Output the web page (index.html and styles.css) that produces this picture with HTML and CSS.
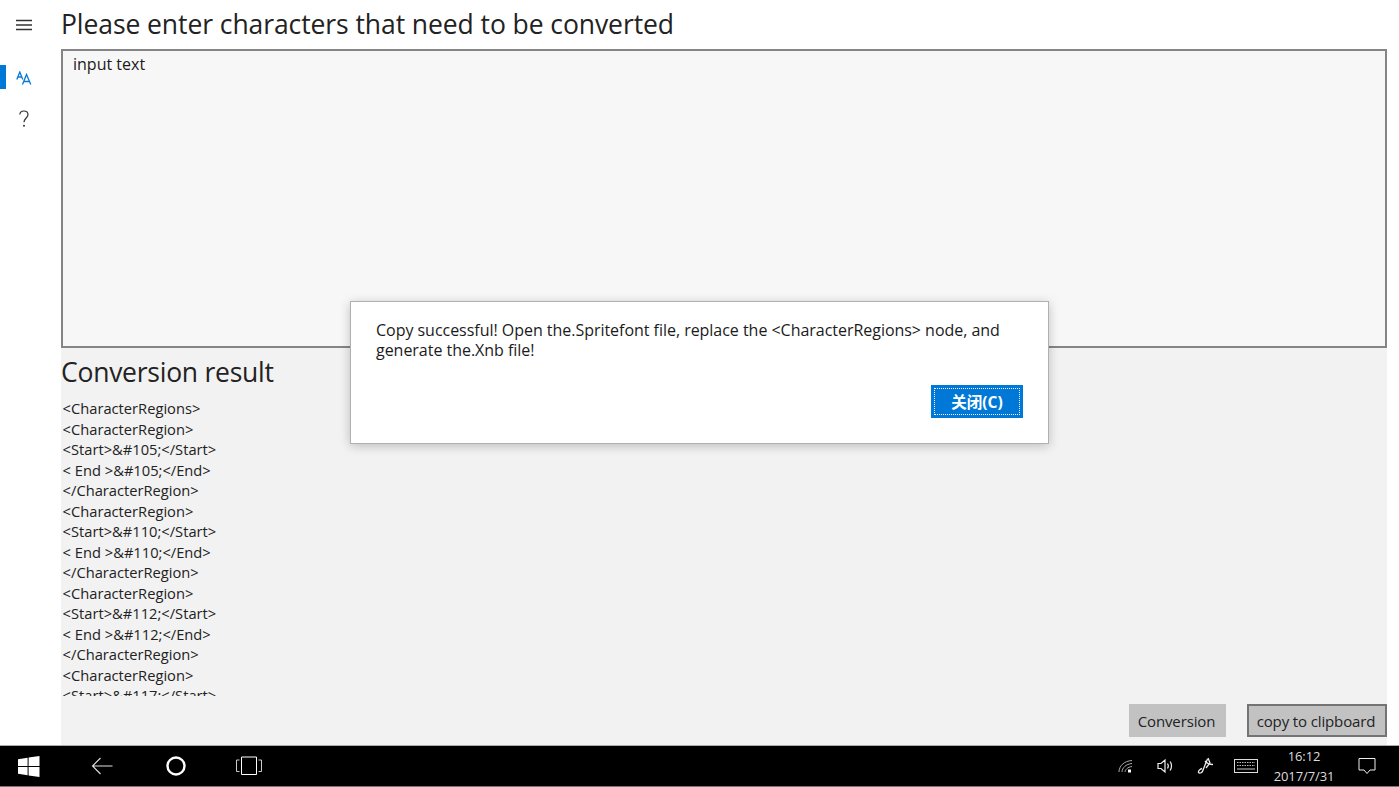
FILE: index.html
```html
<!DOCTYPE html>
<html lang="en">
<head>
<meta charset="utf-8">
<title>Character conversion</title>
<link rel="stylesheet" href="styles.css">
</head>
<body>
<div class="app">
  <nav class="sidebar">
    <div class="nav-item nav-menu">
      <svg width="18" height="12" viewBox="0 0 18 12"><path d="M1 1.500H17M1 6H17M1 10.500H17" stroke="#333" stroke-width="1.300" fill="none"/></svg>
    </div>
    <div class="nav-item nav-font active">
      <svg width="16" height="14" viewBox="0 0 16 14"><g fill="none" stroke="#0a78d7" stroke-width="1.300"><path d="M0.800 8.500 3.800 1 6.800 8.500M1.800 6H5.800"/><path d="M6.500 13.500 10.500 3.500 14.800 13.500M8 10.500H13.400"/></g></svg>
    </div>
    <div class="nav-item nav-help">
      <svg width="10" height="18" viewBox="0 0 10 18"><path d="M0.800 4.500C1 2.300 2.600 1 4.800 1 7.300 1 9 2.500 9 4.700 9 7.800 5 8.300 5 12.200" fill="none" stroke="#333" stroke-width="1.200"/><circle cx="5" cy="15.800" r="1" fill="#333"/></svg>
    </div>
  </nav>
  <main class="content">
    <h1 class="heading">Please enter characters that need to be converted</h1>
    <div class="input-box">input text</div>
    <section class="result">
      <h2 class="heading result-title">Conversion result</h2>
      <pre class="code">&lt;CharacterRegions&gt;
&lt;CharacterRegion&gt;
&lt;Start&gt;&amp;#105;&lt;/Start&gt;
&lt; End &gt;&amp;#105;&lt;/End&gt;
&lt;/CharacterRegion&gt;
&lt;CharacterRegion&gt;
&lt;Start&gt;&amp;#110;&lt;/Start&gt;
&lt; End &gt;&amp;#110;&lt;/End&gt;
&lt;/CharacterRegion&gt;
&lt;CharacterRegion&gt;
&lt;Start&gt;&amp;#112;&lt;/Start&gt;
&lt; End &gt;&amp;#112;&lt;/End&gt;
&lt;/CharacterRegion&gt;
&lt;CharacterRegion&gt;
&lt;Start&gt;&amp;#117;&lt;/Start&gt;</pre>
      <div class="actions">
        <button class="btn">Conversion</button>
        <button class="btn btn-focus">copy to clipboard</button>
      </div>
    </section>
  </main>
</div>
<footer class="taskbar">
  <div class="task-left">
    <svg class="ti-win" width="22" height="21" viewBox="0 0 22 21"><path fill="#fff" d="M0 3.200 9.600 1.800V10H0ZM10.600 1.600 21.500 0V10H10.600ZM0 11H9.600V19.200L0 17.800ZM10.600 11H21.500V21L10.600 19.400Z"/></svg>
    <svg class="ti-back" width="22" height="18" viewBox="0 0 22 18"><path d="M21.500 9H1.500M9.500 1 1.500 9l8 8" fill="none" stroke="#e0e0e0" stroke-width="1.100"/></svg>
    <svg class="ti-circle" width="20" height="20" viewBox="0 0 20 20"><circle cx="10" cy="10" r="8.500" fill="none" stroke="#fff" stroke-width="2.400"/></svg>
    <svg class="ti-task" width="26" height="20" viewBox="0 0 26 20"><path d="M5.500 1H20.500V18.500H5.500Z" fill="none" stroke="#fff" stroke-width="1"/><path d="M3.500 4H0.500V15.500H3.500M22.500 4H25.500V15.500H22.500" fill="none" stroke="#ccc" stroke-width="1"/></svg>
  </div>
  <div class="task-right">
    <svg class="ti-wifi" width="15" height="14" viewBox="0 0 15 14"><g fill="none" stroke="#aaa" stroke-width="1"><path d="M1 13C1 7 6 2 14 1.500"/><path d="M4 13C4 9 8 5 14 4.500"/><path d="M7 13C7 11 9.500 8 14 7.500"/></g><rect x="10" y="10.500" width="3" height="3" fill="#fff"/></svg>
    <svg width="18" height="16" viewBox="0 0 18 16"><g fill="none" stroke="#eee" stroke-width="1.200"><path d="M1 5.500H4L8 2V14L4 10.500H1Z"/><path d="M10.500 5.500C11.500 7 11.500 9 10.500 10.500"/><path d="M13 3.500C15 6 15 10 13 12.500"/></g></svg>
    <svg width="18" height="18" viewBox="0 0 18 18"><g fill="none" stroke="#eee" stroke-width="1.300"><path d="M10.500 2 6 13C5.500 15.500 3 17 1.500 15.500 1 14 3 12 5 11.500"/><path d="M8 4C9.500 6 11 7.500 16 7.500"/><path d="M11 1 13 6 9 11"/></g></svg>
    <svg class="ti-keys" width="24" height="14" viewBox="0 0 24 14"><rect x="0.500" y="0.500" width="23" height="13" fill="none" stroke="#ddd"/><path d="M3 3.500H21M3 6.500H21" stroke="#bbb" stroke-dasharray="1.500 1"/><path d="M3 10H21" stroke="#ccc"/></svg>
    <div class="clock"><span>16:12</span><span>2017/7/31</span></div>
    <svg class="ti-note" width="18" height="18" viewBox="0 0 18 18"><path d="M1 1.500H17V13H12L9 16.500 6 13H1Z" fill="none" stroke="#eee" stroke-width="1"/></svg>
  </div>
</footer>
<div class="dialog" role="dialog">
  <p class="dialog-text">Copy successful! Open the.Spritefont file, replace the &lt;CharacterRegions&gt; node, and generate the.Xnb file!</p>
  <div class="dialog-actions">
    <button class="dialog-btn"><span class="dialog-btn-label">关闭(C)</span></button>
  </div>
</div>
</body>
</html>
```
FILE: styles.css
```css
* { box-sizing: border-box; }
html, body { margin: 0; height: 787px; overflow: hidden; background: #fff; }
body { font-family: "Open Sans", "Noto Sans CJK SC", sans-serif; color: #1b1b1b; position: relative; }
.app { display: flex; height: 745px; }
.sidebar { width: 61px; flex: none; background: #fff; display: flex; flex-direction: column; }
.nav-item { height: 41px; display: flex; align-items: center; justify-content: center; padding-right: 13px; position: relative; }
.nav-menu { height: 50px; }
.nav-font { margin-top: 7px; }
.nav-font.active::before { content: ""; position: absolute; left: 0; top: 8px; width: 6px; height: 24px; background: #0078d7; }
.content { width: 1326px; flex: none; display: flex; flex-direction: column; }
.heading { margin: 0; font-weight: 400; font-size: 26.5px; line-height: 49px; height: 49px; letter-spacing: -0.08px; color: #222; white-space: nowrap; background: #fff; }
.input-box { height: 299px; flex: none; border: 2px solid #858585; background: #f7f7f7; padding: 2px 10px; font-size: 16px; line-height: 22px; }
.result { flex: 1; background: #f2f2f2; display: flex; flex-direction: column; min-height: 0; }
.result-title { background: transparent; line-height: 48px; height: 48px; letter-spacing: -0.25px; }
.code { margin: 0 0 0 1.600px; height: 300px; overflow: hidden; font-family: inherit; font-size: 14.7px; line-height: 20.5px; padding-top: 2px; white-space: pre; flex: none; color: #222; }
.actions { display: flex; justify-content: flex-end; gap: 21px; margin-top: 8px; }
.btn { height: 33px; border: 0; background: #c2c2c2; font: inherit; font-size: 15px; letter-spacing: -0.13px; color: #222; padding: 0 2px 0 0; width: 97px; }
.btn-focus { width: 140px; border: 2px solid #747474; }
.taskbar { height: 42px; background: #000; border-top: 1px solid #aaa; border-bottom: 1px solid #777; display: flex; align-items: center; justify-content: space-between; color: #ddd; }
.task-left { display: flex; align-items: center; padding-left: 18px; }
.ti-back { margin-left: 51px; }
.ti-circle { margin-left: 53px; }
.ti-task { margin-left: 50px; }
.task-right { display: flex; align-items: center; gap: 22px; padding-right: 23px; }
.ti-wifi { margin-right: 2px; }
.ti-keys { margin-left: -3px; }
.clock { display: flex; flex-direction: column; align-items: center; font-size: 13px; line-height: 20px; letter-spacing: -0.1px; width: 60px; margin-left: -6px; margin-right: 3px; }
.ti-note { margin-left: -1px; }
.dialog { position: absolute; left: 350px; top: 301px; width: 699px; height: 143px; background: #fff; border: 1px solid #b0b0b0; box-shadow: 0 2px 10px rgba(0,0,0,.22); padding: 18px 25px 0 25px; display: flex; flex-direction: column; }
.dialog-text { margin: 0; font-size: 16px; line-height: 20px; letter-spacing: -0.03px; color: #1b1b1b; }
.dialog-actions { display: flex; justify-content: flex-end; margin-top: 25px; }
.dialog-btn { width: 92px; height: 33px; background: #0078d7; border: 0; padding: 3px; color: #fff; font: inherit; font-weight: 700; font-size: 15.5px; }
.dialog-btn-label { display: flex; align-items: center; justify-content: center; height: 100%; border: 1px dotted #fff; }
```
